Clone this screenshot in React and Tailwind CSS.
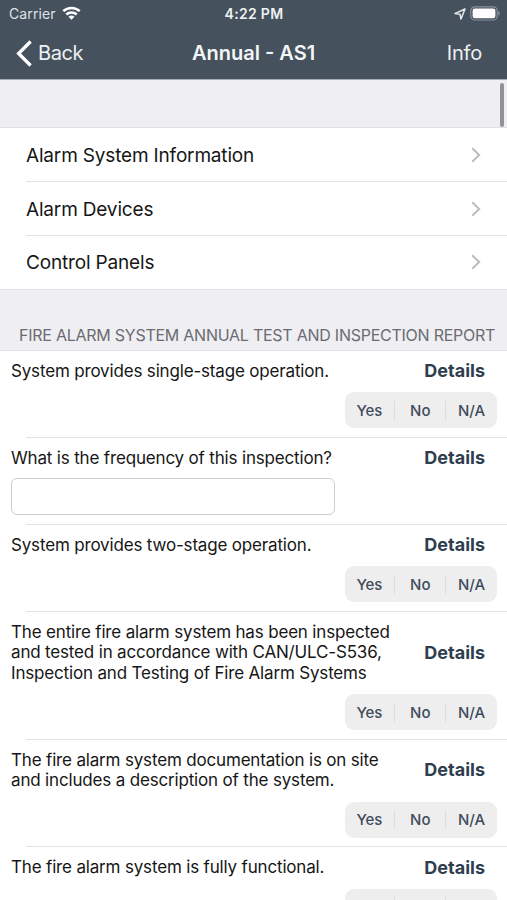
import React, { useState } from "react";

const menuItems = ["Alarm System Information", "Alarm Devices", "Control Panels"];

const questions = [
  { id: 1, type: "choice", text: "System provides single-stage operation." },
  { id: 2, type: "text", text: "What is the frequency of this inspection?" },
  { id: 3, type: "choice", text: "System provides two-stage operation." },
  {
    id: 4,
    type: "choice",
    text: "The entire fire alarm system has been inspected\nand tested in accordance with CAN/ULC-S536,\nInspection and Testing of Fire Alarm Systems",
  },
  {
    id: 5,
    type: "choice",
    text: "The fire alarm system documentation is on site\nand includes a description of the system.",
  },
  { id: 6, type: "choice", text: "The fire alarm system is fully functional." },
];

const StatusBar = () => (
  <div className="grid h-[27px] grid-cols-[1fr_auto_1fr] items-center pl-[7px] pr-[6px] text-[14px]">
    <div className="flex items-center gap-[6px] pl-[2px] text-[#dfe3e7]">
      <span className="tracking-[0.1px]">Carrier</span>
      <svg width="19" height="14" viewBox="0 0 19 14" fill="none" stroke="#fff" strokeWidth="2.5" className="-mt-[2px]">
        <path d="M1.3 5.2C5.8 0.9 13.2 0.9 17.7 5.2" />
        <path d="M4.3 8.5C7.2 5.7 11.8 5.7 14.7 8.5" />
        <path d="M9.5 13.8L6.5 10.7C8.2 9.2 10.8 9.2 12.5 10.7Z" fill="#fff" stroke="none" />
      </svg>
    </div>
    <span className="text-center font-semibold tracking-[0.3px] text-[#eef1f3]">4:22 PM</span>
    <div className="flex items-center justify-end gap-[4px]">
      <svg width="12" height="12" viewBox="0 0 12 12" fill="none" stroke="#e8ebee" strokeWidth="1.5" strokeLinejoin="round">
        <path d="M11 1L1 5.6L6 6.2L7 11Z" />
      </svg>
      <svg width="31" height="15" viewBox="0 0 31 15" fill="none">
        <rect x="0.8" y="0.8" width="26.4" height="13.2" rx="4" stroke="#89929a" strokeWidth="1.2" />
        <rect x="2.6" y="2.6" width="22.8" height="9.6" rx="2.2" fill="#fff" />
        <path d="M28.3 5C30.4 6 30.4 8.8 28.3 9.8Z" fill="#89929a" />
      </svg>
    </div>
  </div>
);

const NavBar = () => (
  <div className="grid h-[52px] grid-cols-[1fr_auto_1fr] items-center px-4">
    <button type="button" className="flex items-center gap-[6px] text-[20px] tracking-[-0.4px] text-[#edf0f2]">
      <svg width="16" height="27" viewBox="0 0 16 27" fill="none" stroke="#fff" strokeWidth="3.3">
        <path d="M14.6 1.5L2.6 13.5L14.6 25.5" />
      </svg>
      Back
    </button>
    <h1 className="text-[20px] font-semibold text-[#f3f5f6]">Annual - AS1</h1>
    <button type="button" className="mr-[9px] justify-self-end text-[20px] tracking-[-0.2px] text-[#edf0f2]">Info</button>
  </div>
);

const Segmented = () => {
  const [value, setValue] = useState(null);

  return (
    <div className="ml-auto grid h-[36px] w-[152.5px] grid-cols-3 items-center rounded-[9px] bg-[#eeeeef]">
      {["Yes", "No", "N/A"].map((option) => (
        <button
          key={option}
          type="button"
          aria-pressed={value === option}
          onClick={() => setValue(option)}
          className="h-[19px] border-r border-[#dcdcde] text-[15px] leading-[19px] font-medium text-[#3e4c5b] last:border-r-0"
        >
          {option}
        </button>
      ))}
    </div>
  );
};

const Question = ({ type, text }) => (
  <div>
    <div className="pt-[9.9px] pr-[10px] pb-[8.6px] pl-[11px]">
      <div className="flex items-center justify-between pr-[12px]">
        <p className="whitespace-pre text-[17px] leading-[20.5px] tracking-[-0.17px] text-[#161616]">{text}</p>
        <button type="button" className="h-5 text-[18px] leading-5 font-bold text-[#2f3e4f]">Details</button>
      </div>
      {type === "text" ? (
        <input type="text" className="mt-[10px] block h-[37px] w-[324px] rounded-[6px] border border-[#cfcfd0] bg-white px-2 text-[16px]" />
      ) : (
        <div className="mt-[11px]">
          <Segmented />
        </div>
      )}
    </div>
    <div className="ml-[26px] h-px bg-[#e3e3e5]" />
  </div>
);

export default function App() {
  return (
    <div className="relative h-[900px] w-[507px] overflow-hidden bg-white font-['Inter','Liberation_Sans',sans-serif]">
      <header className="h-[79px] bg-[#45515d]">
        <StatusBar />
        <NavBar />
      </header>

      <div className="h-[49px] border-t border-b border-t-[#a9adb7] border-b-[#e1e1e4] bg-[#eeeef3]" />

      {/* Scroll indicator */}
      <div className="absolute top-[83px] right-[3.5px] h-[44px] w-[4px] rounded-full bg-[#939297]" />

      <nav>
        {menuItems.map((item) => (
          <a key={item} href="#" className="group block">
            <div className="flex h-[53px] items-center justify-between pr-[26px] pl-[26px] group-last:h-[52.5px]">
              <span className="pt-[3px] text-[19px] tracking-[-0.17px] text-[#161616] group-last:pt-[2px]">{item}</span>
              <svg width="10" height="16" viewBox="0 0 10 16" fill="none" stroke="#bdbdc0" strokeWidth="2">
                <path d="M1.2 1.2L8.2 8L1.2 14.8" />
              </svg>
            </div>
            <div className="ml-[26px] h-px bg-[#e3e3e5] group-last:ml-0" />
          </a>
        ))}
      </nav>

      <section>
        <div className="flex h-[61.5px] items-end border-b border-[#e1e1e4] bg-[#eeeef3] pb-[5px] pl-[19px]">
          <h2 className="whitespace-nowrap text-[16px] leading-5 tracking-[-0.25px] text-[#6b6b70]">
            FIRE ALARM SYSTEM ANNUAL TEST AND INSPECTION REPORT
          </h2>
        </div>
        {questions.map((question) => (
          <Question key={question.id} type={question.type} text={question.text} />
        ))}
      </section>
    </div>
  );
}
